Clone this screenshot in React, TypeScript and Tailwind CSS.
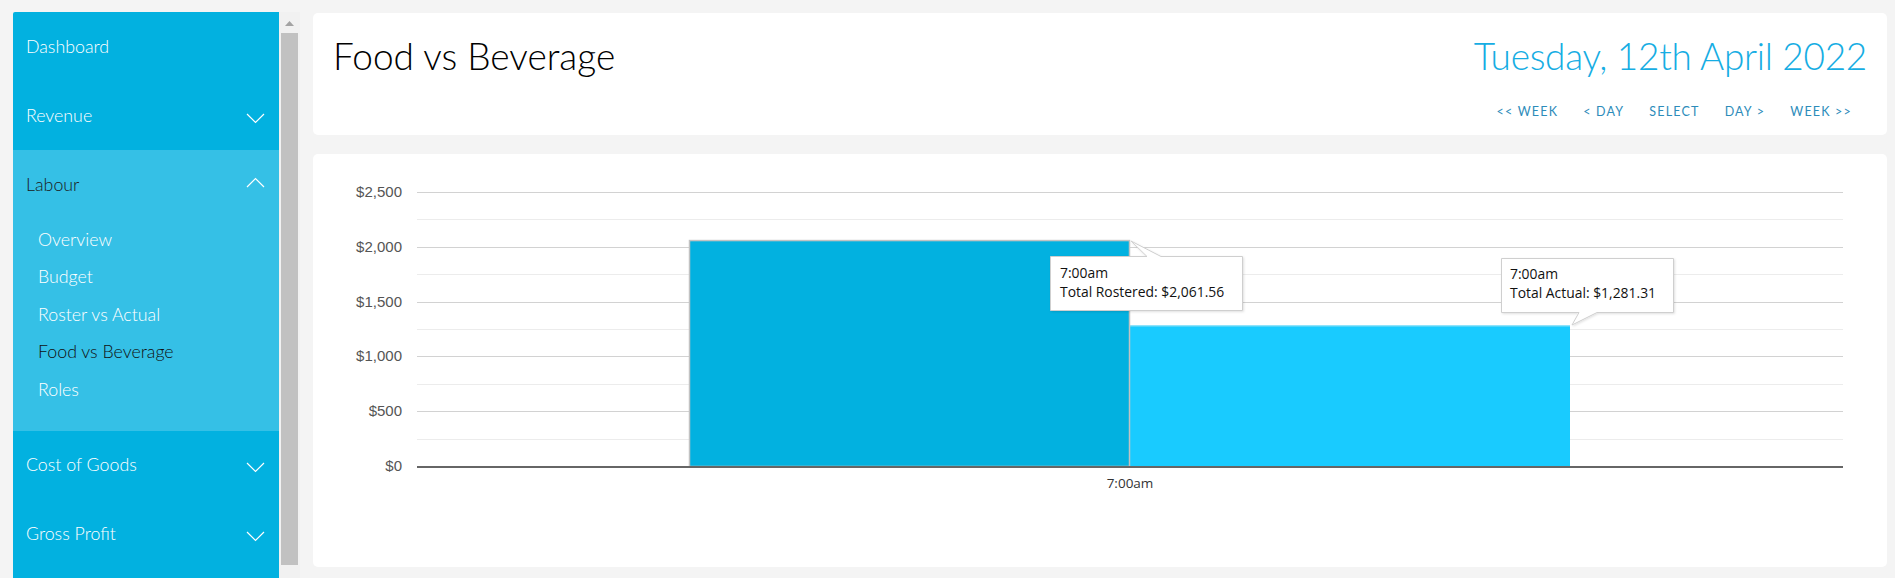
import React from "react";

const Chevron = ({ up = false }: { up?: boolean }) => (
  <svg width="19" height="11" viewBox="0 0 19 11" className={up ? "-mt-[4px]" : "mt-[5px]"}>
    <polyline
      points={up ? "1,10 9.5,1.5 18,10" : "1,1 9.5,9.5 18,1"}
      fill="none"
      stroke="#ffffff"
      strokeWidth="1.2"
    />
  </svg>
);

const Header = ({ label, chevron, up, dark }: { label: string; chevron?: boolean; up?: boolean; dark?: boolean }) => (
  <div className="h-[69px] flex items-center justify-between pl-[13px] pr-[14px]">
    <span className={dark ? "text-[#1a1a1a]" : "text-white"}>{label}</span>
    {chevron && <Chevron up={up} />}
  </div>
);

const subItems = ["Overview", "Budget", "Roster vs Actual", "Food vs Beverage", "Roles"];

const Y0 = 312;
const K = 274 / 2500;
const yv = (v: number) => Y0 - v * K;

function Chart() {
  const majors = [0, 500, 1000, 1500, 2000, 2500];
  const minors = [250, 750, 1250, 1750, 2250];
  const b1 = yv(2061.56);
  const b2 = yv(1281.31);
  return (
    <svg width="1574" height="413" viewBox="0 0 1574 413" className="block">
      <defs>
        <filter id="sh" x="-10%" y="-10%" width="130%" height="140%">
          <feDropShadow dx="1" dy="1" stdDeviation="1" floodColor="#000" floodOpacity="0.12" />
        </filter>
      </defs>
      {minors.map((v) => (
        <line key={v} x1="104" x2="1530" y1={Math.round(yv(v)) + 0.5} y2={Math.round(yv(v)) + 0.5} stroke="#ececec" strokeWidth="1" />
      ))}
      {majors.slice(1).map((v) => (
        <line key={v} x1="104" x2="1530" y1={Math.round(yv(v)) + 0.5} y2={Math.round(yv(v)) + 0.5} stroke="#d2d2d2" strokeWidth="1" />
      ))}
      {majors.map((v) => (
        <text
          key={v}
          x="89"
          y={yv(v) + 5}
          textAnchor="end"
          fontFamily="'Liberation Sans', Arial, sans-serif"
          fontSize="15"
          fill="#555"
        >
          {"$" + v.toLocaleString("en-US")}
        </text>
      ))}
      <rect x="817" y={b2} width="440" height={Y0 - b2} fill="#19cbff" />
      <line x1="817" x2="1257" y1={b2 + 0.5} y2={b2 + 0.5} stroke="#7fdcf5" strokeWidth="1" />
      <rect x="376.5" y={b1 + 0.5} width="440" height={Y0 - b1} fill="#02b1e0" stroke="#c2c2c2" strokeWidth="1.5" />
      <line x1="104" x2="1530" y1="313" y2="313" stroke="#666" strokeWidth="2" />
      <text x="817" y="334" textAnchor="middle" fontFamily="'Open Sans', sans-serif" fontSize="13.5" fill="#333">
        7:00am
      </text>

      <g filter="url(#sh)">
        <path d="M737.5,102.5 H834 L818,87 L848,102.5 H929.5 V156.5 H737.5 Z" fill="#fff" stroke="#cfcfcf" strokeWidth="1" />
      </g>
      <g fontFamily="'Open Sans', sans-serif" fontSize="13.9" fill="#111">
        <text x="747" y="124">7:00am</text>
        <text x="747" y="143">Total Rostered: $2,061.56</text>
      </g>

      <g filter="url(#sh)">
        <path d="M1188.5,104.5 H1360.5 V158.5 H1284 L1259,171 L1266,158.5 H1188.5 Z" fill="#fff" stroke="#cfcfcf" strokeWidth="1" />
      </g>
      <g fontFamily="'Open Sans', sans-serif" fontSize="13.9" fill="#111">
        <text x="1197" y="125">7:00am</text>
        <text x="1197" y="144">Total Actual: $1,281.31</text>
      </g>
    </svg>
  );
}

export default function App() {
  return (
    <div
      className="flex h-[578px] w-[1895px] overflow-hidden bg-[#f4f4f4] pl-[13px] pt-[12px]"
      style={{ fontFamily: "Lato, 'Open Sans', sans-serif" }}
    >
      {/* Sidebar */}
      <div className="w-[266px] shrink-0 bg-[#02b1e0] rounded-tl-[2px] text-[17.8px] leading-none font-light">
        <Header label="Dashboard" />
        <Header label="Revenue" chevron />
        <div className="bg-[#35c0e6]">
          <Header label="Labour" chevron up dark />
          <div className="pt-[2px] pb-[22px]">
            {subItems.map((s) => (
              <div
                key={s}
                className={
                  "h-[37.5px] flex items-center pl-[25px] " +
                  (s === "Food vs Beverage" ? "text-[#111]" : "text-white")
                }
              >
                {s}
              </div>
            ))}
          </div>
        </div>
        <Header label="Cost of Goods" chevron />
        <Header label="Gross Profit" chevron />
      </div>

      {/* Scrollbar */}
      <div className="w-[21px] shrink-0 bg-[#f1f1f1] flex flex-col items-center">
        <div className="h-[21px] flex items-center justify-center pt-[1px]">
          <svg width="9" height="5" viewBox="0 0 9 5">
            <polygon points="4.5,0 9,5 0,5" fill="#a3a3a3" />
          </svg>
        </div>
        <div className="w-[17px] h-[532px] bg-[#c1c1c1]" />
      </div>

      {/* Main */}
      <div className="ml-[13px] w-[1574px] shrink-0 pt-[1px] flex flex-col">
        <div className="h-[122px] bg-white rounded-[5px] flex justify-between px-[20px]">
          <div className="pt-[15px] text-[37px] leading-[56px] text-black font-light">Food vs Beverage</div>
          <div className="flex flex-col items-end">
            <div className="pt-[15px] text-[37px] leading-[56px] text-[#16ade3] font-light tracking-[-0.3px]">
              Tuesday, 12th April 2022
            </div>
            <div className="mt-[19px] flex gap-[25px] text-[12.5px] tracking-[1.2px] text-[#2d8cba] pr-[15px]">
              <span>&lt;&lt; WEEK</span>
              <span>&lt; DAY</span>
              <span>SELECT</span>
              <span>DAY &gt;</span>
              <span>WEEK &gt;&gt;</span>
            </div>
          </div>
        </div>
        <div className="mt-[19px] h-[413px] bg-white rounded-[5px] overflow-hidden">
          <Chart />
        </div>
      </div>
    </div>
  );
}
